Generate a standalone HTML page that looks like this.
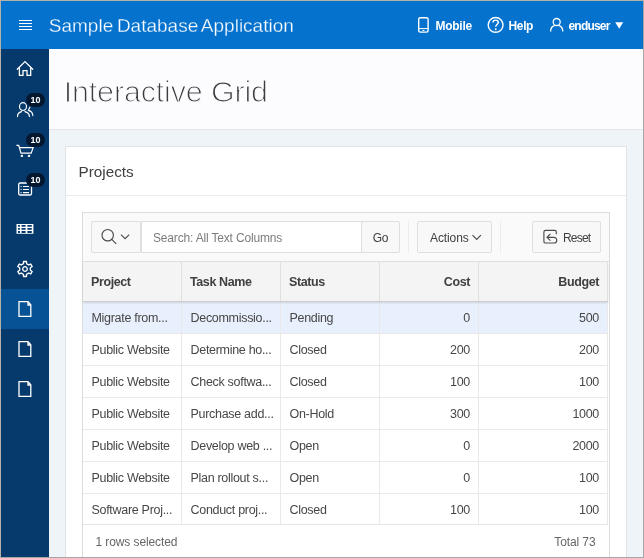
<!DOCTYPE html>
<html>
<head>
<meta charset="utf-8">
<title>Interactive Grid</title>
<style>
*{box-sizing:border-box;margin:0;padding:0}
html,body{width:644px;height:558px;overflow:hidden;background:#eff4f9}
body{font-family:"Liberation Sans",sans-serif;color:#404040;position:relative}
.abs{position:absolute}
#hdr,#side,#titlebar,#region,#ig{will-change:transform}
#frame{position:absolute;left:0;top:0;width:644px;height:558px;border:1px solid #a6a6a6;border-top-color:#b5b0a8;border-left-color:#b5b0a8;z-index:50;pointer-events:none}
#hdr{left:1px;top:1px;width:642px;height:48px;background:#0572ce}
#side{left:1px;top:49px;width:48px;height:508px;background:#06396c}
#side .act{left:0;top:240px;width:48px;height:40px;background:#065294}
#icons{left:0;top:0;z-index:5}
.badge{background:#031830;border-radius:7px;width:19px;height:14px;color:#fff;font-size:9px;font-weight:bold;line-height:14px;text-align:center;left:25px;z-index:6}
#titlebar{left:49px;top:49px;width:594px;height:81px;background:#fcfcfe;border-bottom:1px solid #e3e6e9}
#title{left:14.7px;top:21.5px;font-size:30.4px;color:#3c3c3c;white-space:nowrap;line-height:40px;letter-spacing:-0.12px;-webkit-text-stroke:1.1px #fcfcfe}
#apptitle{left:47.8px;top:11px;font-size:19px;color:#fff;white-space:nowrap;line-height:28px;word-spacing:-1.6px;-webkit-text-stroke:0.3px #0572ce}
.hl{color:#fff;font-size:12px;font-weight:bold;white-space:nowrap;line-height:16px}
#region{left:65px;top:146px;width:562px;height:420px;background:#fff;border:1px solid #e0e3e6}
#rtitle{left:12.5px;top:15px;font-size:15.3px;color:#404040;line-height:20px;white-space:nowrap;letter-spacing:0}
#rhb{left:0;top:48px;width:560px;height:1px;background:#e9ebed}
#ig{left:82px;top:212px;width:528px;height:360px;background:#fff;border:1px solid #dcdcdc}
#tb{left:0;top:0;width:526px;height:49px;background:#fafafa;border-bottom:1px solid #e0e0e0}
.btn{background:#f8f8f8;border:1px solid #dfdfdf;border-radius:2px;height:32px;top:8px;font-size:12px;color:#404040;line-height:32px;white-space:nowrap}
.sep{top:8px;width:1px;height:32px;background:#ececec}
#ghead{left:0;top:49px;width:525px;height:40px;background:#f4f4f4;border-bottom:1px solid #cdcdcd;box-shadow:0 1px 2px rgba(0,0,0,.12);z-index:3}
.hc{top:0;height:39px;border-right:1px solid #e0e0e0;font-weight:bold;font-size:12.5px;line-height:41px;color:#404040;white-space:nowrap;padding:0 8px;letter-spacing:-0.4px}
.row{left:0;width:525px;height:32px;border-bottom:1px solid #e9e9e9;background:#fff}
.row.sel{background:#e9f0fd}
.c{top:0;height:31px;border-right:1px solid #e9e9e9;font-size:12.5px;line-height:33px;color:#474747;white-space:nowrap;padding:0 8px 0 8.5px;overflow:hidden;letter-spacing:-0.3px}
.r{text-align:right;padding:0 8px}
.c1{left:0;width:99px}.c2{left:99px;width:99px}.c3{left:198px;width:99px}.c4{left:297px;width:99px}.c5{left:396px;width:129px}
#foot{left:0;top:311px;width:525px;height:40px;background:#fff;border-top:1px solid #e6e6e6;z-index:4;font-size:12px;color:#666;line-height:34px;letter-spacing:-0.1px;white-space:nowrap}
</style>
</head>
<body>
<div id="hdr" class="abs">
  <svg class="abs" style="left:0;top:0" width="642" height="48" viewBox="1 1 642 48" fill="none" stroke="#fff">
    <path d="M19 20.5h13M19 23.5h13M19 26.5h13M19 29.5h13" stroke-width="1"/>
    <!-- mobile -->
    <rect x="418.7" y="17.7" width="9.4" height="14.4" rx="1.6" stroke-width="1.4"/>
    <path d="M418.6 28.6h9.6" stroke-width="1"/><path d="M422.4 30.5h2" stroke-width="1"/>
    <!-- help -->
    <circle cx="495.6" cy="24.9" r="7.4" stroke-width="1.4"/>
    <path d="M493 22.6c0-1.6 1.2-2.5 2.7-2.5s2.6 1 2.6 2.3c0 2.1-2.6 2.2-2.6 4.4" stroke-width="1.45"/>
    <circle cx="495.7" cy="29.3" r="0.95" fill="#fff" stroke="none"/>
    <!-- user -->
    <circle cx="556.7" cy="22" r="3.5" stroke-width="1.3"/>
    <path d="M550.6 31.6c0-3.3 2-5.6 4.2-6.2M562.8 31.6c0-3.3-2-5.6-4.2-6.2" stroke-width="1.3"/>
    <path d="M615.2 22.3h8l-4 6.5z" fill="#fff" stroke="none"/>
  </svg>
  <div id="apptitle" class="abs">Sample Database Application</div>
  <div class="hl abs" style="left:434.4px;top:17px;letter-spacing:-0.25px">Mobile</div>
  <div class="hl abs" style="left:507.5px;top:17px;letter-spacing:-0.35px">Help</div>
  <div class="hl abs" style="left:567.5px;top:17px;letter-spacing:-0.8px">enduser</div>
</div>
<div id="side" class="abs">
  <div class="act abs"></div>
  <svg id="icons" class="abs" width="48" height="508" viewBox="1 49 48 508" fill="none" stroke="#fff" stroke-width="1.3">
    <!-- home -->
    <path d="M17.3 69.2L25 61.6l7.7 7.6" stroke-linecap="round" stroke-linejoin="miter"/>
    <path d="M19.4 67.6v7.7h3.6v-4.6h4v4.6h3.7v-7.7"/>
    <!-- users -->
    <ellipse cx="23" cy="106.6" rx="3.5" ry="3.9" stroke-width="1.2"/>
    <path d="M17.5 116.6c0-2.6 1.6-4.2 4-4.9M29.4 116.6c0-2.6-1.6-4.2-4.5-4.9" stroke-width="1.2" stroke-linecap="round"/>
    <path d="M30 106.9c-.6 1.6-1.4 2.6-1.6 3.4 2.6.6 4.3 2.3 4.4 5.3" stroke-width="1.2" stroke-linecap="round"/>
    <!-- cart -->
    <path d="M16.4 145.4h2.3l2.3 7.7h10.2l1.9-5.4H19.6" stroke-width="1.2" stroke-linejoin="miter"/>
    <rect x="20.8" y="154.9" width="2.2" height="2" fill="#fff" stroke="none"/><rect x="27.9" y="154.9" width="2.2" height="2" fill="#fff" stroke="none"/>
    <!-- list -->
    <rect x="18.7" y="183" width="12.8" height="12" rx="1.6"/>
    <path d="M20.6 186.5h1M23 186.5h6M20.6 189.5h1M23 189.5h6M20.6 192.6h1M23 192.6h6" stroke-width="1.2"/>
    <!-- table -->
    <path d="M16.5 224.1h16.9v9.7H16.5z M18 225h1.9v1.8H18z M21.5 225h4.1v1.8h-4.1z M27.4 225h4.4v1.8h-4.4z M18 228h1.9v1.8H18z M21.5 228h4.1v1.8h-4.1z M27.4 228h4.4v1.8h-4.4z M18 231.1h1.9v1.8H18z M21.5 231.1h4.1v1.8h-4.1z M27.4 231.1h4.4v1.8h-4.4z" fill="#fff" fill-rule="evenodd" stroke="none"/>
    <!-- gear -->
    <g transform="translate(25 269)"><path d="M-1.61 -5.26 L-1.45 -7.46 L1.45 -7.46 L1.61 -5.26 L3.75 -4.02 L5.74 -4.99 L7.19 -2.47 L5.36 -1.24 L5.36 1.24 L7.19 2.47 L5.74 4.99 L3.75 4.02 L1.61 5.26 L1.45 7.46 L-1.45 7.46 L-1.61 5.26 L-3.75 4.02 L-5.74 4.99 L-7.19 2.47 L-5.36 1.24 L-5.36 -1.24 L-7.19 -2.47 L-5.74 -4.99 L-3.75 -4.02Z" stroke-width="1.4" stroke-linejoin="round"/><circle r="2.3" stroke-width="1.3"/></g>
    <!-- docs -->
    <path id="doc" d="M19 301.7h9l2.8 3v11.6H19zM28 301.7v3.3h2.8"/>
    <path d="M19 341.7h9l2.8 3v11.6H19zM28 341.7v3.3h2.8"/>
    <path d="M19 381.7h9l2.8 3v11.6H19zM28 381.7v3.3h2.8"/>
  </svg>
  <div class="badge abs" style="top:44px">10</div>
  <div class="badge abs" style="top:84px">10</div>
  <div class="badge abs" style="top:124px">10</div>
</div>
<div id="titlebar" class="abs"><div id="title" class="abs">Interactive Grid</div></div>
<div id="region" class="abs">
  <div id="rtitle" class="abs">Projects</div>
  <div id="rhb" class="abs"></div>
</div>
<div id="ig" class="abs">
  <div id="tb" class="abs">
    <div class="btn abs" style="left:8px;width:50px"></div>
    <div class="abs" style="left:58px;top:8px;width:221px;height:32px;background:#fff;border:1px solid #dfdfdf;font-size:12px;line-height:32px;color:#7c7c7c;padding-left:11px;letter-spacing:-0.17px;white-space:nowrap">Search: All Text Columns</div>
    <div class="btn abs" style="left:278px;width:39px;text-align:center;letter-spacing:-0.2px">Go</div>
    <div class="sep abs" style="left:325px"></div>
    <div class="btn abs" style="left:334px;width:75px;padding-left:12px;letter-spacing:-0.1px">Actions</div>
    <div class="sep abs" style="left:417px"></div>
    <div class="btn abs" style="left:449px;width:69px;padding-left:30px;letter-spacing:-0.8px">Reset</div>
    <svg class="abs" style="left:0;top:0" width="526" height="49" viewBox="83 213 526 49" fill="none" stroke="#4c4c4c" stroke-width="1.15">
      <circle cx="107.7" cy="235.2" r="5.7"/><path d="M111.8 239.4l4.4 4.4"/>
      <path d="M121 234.6l4.1 4 4.1-4"/>
      <path d="M472.5 235.2l4.2 4.2 4.2-4.2"/>
      <!-- reset -->
      <path d="M556.3 234.2v-2.2a1.6 1.6 0 0 0-1.6-1.6h-9.2a1.6 1.6 0 0 0-1.6 1.6v9.4a1.6 1.6 0 0 0 1.6 1.6h8.4"/>
      <path d="M547.3 237.3h6.6a2.7 2.7 0 0 1 0 5.7M550.4 233.9l-3.4 3.4 3.4 3.4"/>
    </svg>
  </div>
  <div id="ghead" class="abs">
    <div class="hc abs c1">Project</div><div class="hc abs c2">Task Name</div><div class="hc abs c3">Status</div><div class="hc abs c4 r">Cost</div><div class="hc abs c5 r">Budget</div>
  </div>
  <div class="row sel abs" style="top:89px"><div class="c abs c1">Migrate from...</div><div class="c abs c2">Decommissio...</div><div class="c abs c3">Pending</div><div class="c abs c4 r">0</div><div class="c abs c5 r">500</div></div>
  <div class="row abs" style="top:121px"><div class="c abs c1">Public Website</div><div class="c abs c2">Determine ho...</div><div class="c abs c3">Closed</div><div class="c abs c4 r">200</div><div class="c abs c5 r">200</div></div>
  <div class="row abs" style="top:153px"><div class="c abs c1">Public Website</div><div class="c abs c2">Check softwa...</div><div class="c abs c3">Closed</div><div class="c abs c4 r">100</div><div class="c abs c5 r">100</div></div>
  <div class="row abs" style="top:185px"><div class="c abs c1">Public Website</div><div class="c abs c2">Purchase add...</div><div class="c abs c3">On-Hold</div><div class="c abs c4 r">300</div><div class="c abs c5 r">1000</div></div>
  <div class="row abs" style="top:217px"><div class="c abs c1">Public Website</div><div class="c abs c2">Develop web ...</div><div class="c abs c3">Open</div><div class="c abs c4 r">0</div><div class="c abs c5 r">2000</div></div>
  <div class="row abs" style="top:249px"><div class="c abs c1">Public Website</div><div class="c abs c2">Plan rollout s...</div><div class="c abs c3">Open</div><div class="c abs c4 r">0</div><div class="c abs c5 r">100</div></div>
  <div class="row abs" style="top:281px"><div class="c abs c1">Software Proj...</div><div class="c abs c2">Conduct proj...</div><div class="c abs c3">Closed</div><div class="c abs c4 r">100</div><div class="c abs c5 r">100</div></div>
  <div id="foot" class="abs"><span class="abs" style="left:12.5px">1 rows selected</span><span class="abs" style="right:12.5px">Total 73</span></div>
</div>
<div id="frame"></div>
</body>
</html>
